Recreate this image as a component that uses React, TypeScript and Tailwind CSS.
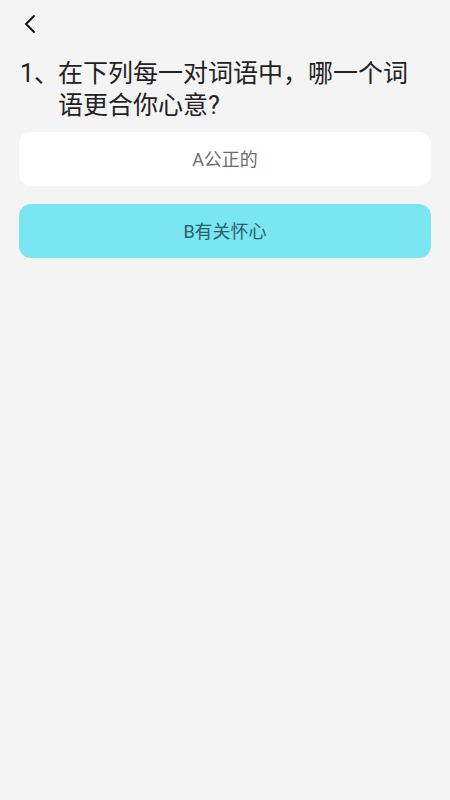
import React from "react";

export default function App() {
  return (
    <div
      className="min-h-[800px] w-full bg-[#f4f4f4]"
      style={{ fontFamily: 'Roboto, "Noto Sans CJK SC", "Noto Sans", sans-serif' }}
    >
      <div className="flex h-[48px] items-center pl-[22px]">
        <svg width="16" height="20" viewBox="0 0 16 20" fill="none">
          <path d="M12 2 L4 10 L12 18" stroke="#111" strokeWidth="2" strokeLinecap="round" strokeLinejoin="round" />
        </svg>
      </div>
      <div className="flex pl-[20px] pr-[30px] pt-[10px] text-[25px] leading-[32px] text-[#222]">
        <span className="shrink-0 w-[38px]">1、</span>
        <span>在下列每一对词语中，哪一个词语更合你心意?</span>
      </div>
      <div className="flex flex-col gap-[18px] px-[19px] pt-[10px]">
        <div className="flex h-[54px] items-center justify-center rounded-[12px] bg-white text-[18px] text-[#6b6b6b]">
          A公正的
        </div>
        <div className="flex h-[54px] items-center justify-center rounded-[12px] bg-[#7ae6f2] text-[18px] text-[#2c5f66]">
          B有关怀心
        </div>
      </div>
    </div>
  );
}
